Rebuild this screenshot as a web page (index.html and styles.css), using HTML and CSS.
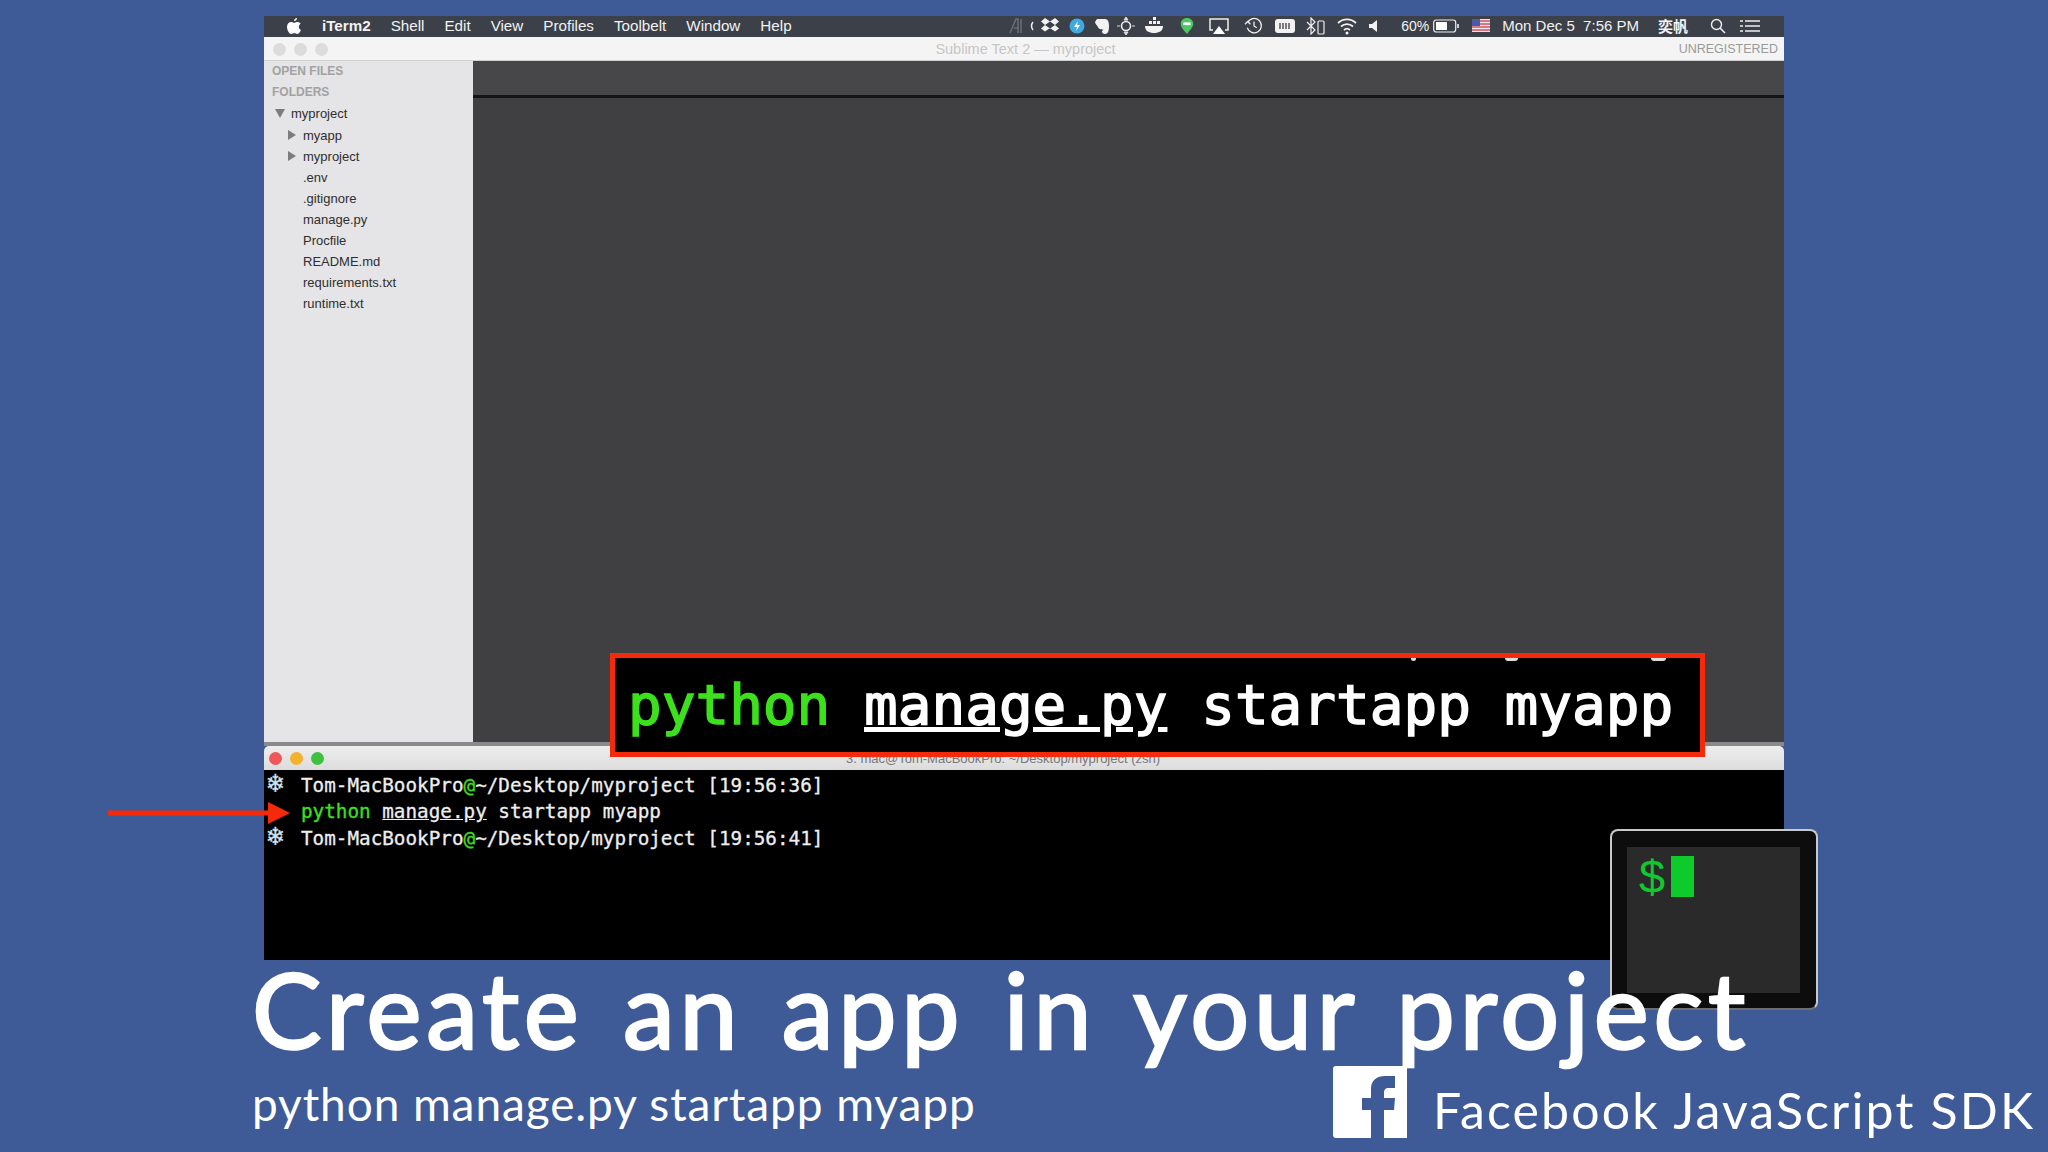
FILE: index.html
```html
<!DOCTYPE html>
<html lang="en">
<head>
    <meta charset="UTF-8">
    <title>Create an app in your project</title>
    <link rel="stylesheet" href="styles.css">
</head>
<body>
    <div class="screen">
        <div class="menubar">
            <svg class="apple" width="16" height="18" viewBox="0 0 16 18"><path d="M11 1c.2 1.500-1.200 3.200-2.900 3.100C7.900 2.600 9.400 1.100 11 1zM14.900 13c-.8 1.900-2.200 4-3.600 4-1.200 0-1.500-.7-3-.7s-1.900.7-3 .7C3.500 17 1 13.500 1 10c0-3.200 2.100-5 4.100-5 1.300 0 2.300.8 3.100.8S9.900 5 11.400 5c1.100 0 2.400.5 3.300 1.700-2.700 1.600-2.300 5.300.2 6.300z" fill="#fff"/></svg>
            <span class="menu-item app-name">iTerm2</span>
            <span class="menu-item">Shell</span>
            <span class="menu-item">Edit</span>
            <span class="menu-item">View</span>
            <span class="menu-item">Profiles</span>
            <span class="menu-item">Toolbelt</span>
            <span class="menu-item">Window</span>
            <span class="menu-item">Help</span>
            <div class="tray">
                <svg class="tray-icon w15" viewBox="0 0 15 18"><path d="M1 16L7 2h2v14M5 11h5M12 2v14" fill="none" stroke="#6b6e75" stroke-width="1.500"/></svg>
                <svg class="tray-icon w5" viewBox="0 0 5 18"><path d="M4 5Q1 9 4 13" fill="none" stroke="#eee" stroke-width="1.500"/></svg>
                <svg class="tray-icon w20 dropbox" viewBox="0 0 20 18"><path d="M5 1l5 3.500L15 1l4 3.500L15 8l4 3.500-4 3-5-3.500-5 3.500-4-3L5 8 1 4.500zM5 8l5 3.500L15 8l-5-3.500z" fill="#f2f2f2"/></svg>
                <svg class="tray-icon w16" viewBox="0 0 16 18"><circle cx="8" cy="9" r="7.500" fill="#3fa9e0"/><path d="M9 4L5 10h3l-1 4 4-6H8z" fill="#fff"/></svg>
                <svg class="tray-icon w16 evernote" viewBox="0 0 16 18"><path d="M3 2h8c3 0 4 3 4 7 0 5-1 8-4 8-2 0-3-1-3-2.500 0-1 1-1.500 2-1.500-2-1-5 0-6-3C3 8 1 7 1 5z" fill="#f2f2f2"/></svg>
                <svg class="tray-icon w20 drone" viewBox="0 0 20 18"><path d="M10 0l2 3H8zM10 18l-2-3h4zM1 9h3M16 9h3" stroke="#ddd" fill="#ddd"/><circle cx="10" cy="9" r="4.500" fill="none" stroke="#eee" stroke-width="1.600"/></svg>
                <svg class="tray-icon w22" viewBox="0 0 22 18"><path d="M1 9h18c0 5-4 7-9 7S1 14 1 9z" fill="#f2f2f2"/><path d="M5 4h3v3H5zM9 4h3v3H9zM9 0h3v3H9zM13 4h3v3h-3z" fill="#f2f2f2"/></svg>
                <svg class="tray-icon w16 line-app" viewBox="0 0 16 20"><path d="M8 1c4 0 7 3 7 6.500 0 4-4 7-7 11.500C5 15 1 11.500 1 7.500 1 4 4 1 8 1z" fill="#4cc764"/><rect x="4" y="6" width="8" height="3" fill="#fff"/></svg>
                <svg class="tray-icon w20 airplay" viewBox="0 0 20 18"><path d="M4 13H1V2h18v11h-3" fill="none" stroke="#eee" stroke-width="1.500"/><path d="M10 9l6 8H4z" fill="#fff"/></svg>
                <svg class="tray-icon w20" viewBox="0 0 20 20"><path d="M3 6a8 8 0 1 1-.5 6" fill="none" stroke="#eee" stroke-width="1.400"/><path d="M0 8l3-3 3 3M10 5v5l3 2" fill="none" stroke="#eee" stroke-width="1.400"/></svg>
                <svg class="tray-icon w20" viewBox="0 0 20 18"><rect x="0" y="2" width="20" height="14" rx="3" fill="#f2f2f2"/><path d="M5 6v6M8 6v6M11 6v6M14 6v6" stroke="#555" stroke-width="1.500"/></svg>
                <svg class="tray-icon w20" viewBox="0 0 20 18"><path d="M1 5l8 8-4 4V1l4 4-8 8" fill="none" stroke="#eee" stroke-width="1.200"/><rect x="12" y="4" width="6" height="13" rx="1" fill="none" stroke="#eee" stroke-width="1.200"/></svg>
                <svg class="tray-icon w20" viewBox="0 0 20 18"><path d="M1 6a13 13 0 0 1 18 0M4 9.500a9 9 0 0 1 12 0M7 13a4.500 4.500 0 0 1 6 0" fill="none" stroke="#f2f2f2" stroke-width="1.800"/><circle cx="10" cy="16" r="1.500" fill="#f2f2f2"/></svg>
                <svg class="tray-icon w12" viewBox="0 0 12 18"><path d="M1 7h3l5-4v12l-5-4H1z" fill="#f2f2f2"/></svg>
                <span class="tray-text pct">60%</span>
                <svg class="tray-icon w26" viewBox="0 0 26 14"><rect x=".7" y="1" width="22" height="12" rx="2.500" fill="none" stroke="#eee" stroke-width="1.200"/><rect x="3" y="3" width="11" height="8" fill="#fff"/><rect x="24" y="5" width="2" height="4" fill="#ccc"/></svg>
                <svg class="tray-icon flag" viewBox="0 0 18 13"><rect width="18" height="13" fill="#e9e9ee"/><path d="M0 2h18M0 5h18M0 8h18M0 11h18" stroke="#d8505f" stroke-width="1.400"/><rect width="8" height="7" fill="#4a5aa8"/></svg>
                <span class="tray-text clock">Mon Dec 5 &nbsp;7:56 PM</span>
                <span class="tray-text name">奕帆</span>
                <svg class="tray-icon search" viewBox="0 0 16 16"><circle cx="6.500" cy="6.500" r="5" fill="none" stroke="#eee" stroke-width="1.400"/><path d="M10 10l5 5" stroke="#eee" stroke-width="1.600"/></svg>
                <svg class="tray-icon lines" viewBox="0 0 20 14"><path d="M5 2h15M5 7h15M5 12h15M0 2h3M0 7h3M0 12h3" stroke="#eee" stroke-width="1.600"/></svg>
            </div>
        </div>

        <div class="sublime">
            <div class="sublime-title">
                <div class="lights">
                    <span class="light"></span>
                    <span class="light"></span>
                    <span class="light"></span>
                </div>
                <span class="sublime-name">Sublime Text 2 — myproject</span>
                <span class="unregistered">UNREGISTERED</span>
            </div>
            <div class="sublime-body">
                <div class="sidebar">
                    <div class="side-head">OPEN FILES</div>
                    <div class="side-head">FOLDERS</div>
                    <div class="side-row"><span class="caret-down"></span>myproject</div>
                    <div class="side-row depth"><span class="caret-right"></span>myapp</div>
                    <div class="side-row depth"><span class="caret-right"></span>myproject</div>
                    <div class="side-row file">.env</div>
                    <div class="side-row file">.gitignore</div>
                    <div class="side-row file">manage.py</div>
                    <div class="side-row file">Procfile</div>
                    <div class="side-row file">README.md</div>
                    <div class="side-row file">requirements.txt</div>
                    <div class="side-row file">runtime.txt</div>
                </div>
                <div class="editor">
                    <div class="tabbar"></div>
                </div>
            </div>
        </div>
        <div class="divider"></div>

        <div class="terminal">
            <div class="term-title">
                <div class="lights">
                    <span class="light red"></span>
                    <span class="light yellow"></span>
                    <span class="light green"></span>
                </div>
                <span class="term-name">3. mac@Tom-MacBookPro: ~/Desktop/myproject (zsh)</span>
            </div>
            <div class="term-body">
                <div class="term-line"><span class="flake">❄</span><span>Tom-MacBookPro<span class="hi">@</span>~/Desktop/myproject [19:56:36]</span></div>
                <div class="term-line"><span class="flake"></span><span><span class="hi">python</span> <u>manage.py</u> startapp myapp</span></div>
                <div class="term-line"><span class="flake">❄</span><span>Tom-MacBookPro<span class="hi">@</span>~/Desktop/myproject [19:56:41]</span></div>
            </div>
        </div>
    </div>

    <div class="callout">
        <span class="blob b1"></span>
        <span class="blob b2"></span>
        <span class="blob b3"></span>
        <div class="callout-text"><span class="hi">python</span> <u>manage.py</u> startapp myapp</div>
    </div>

    <svg class="arrow" width="182" height="22" viewBox="0 0 182 22"><path d="M0 8.500h160V0l22 11-22 11v-8.500H0z" fill="#f52a0a"/></svg>

    <div class="dock-icon">
        <div class="dock-screen">
            <span class="dock-dollar">$</span>
            <span class="dock-cursor"></span>
        </div>
    </div>

    <div class="caption">
        <h1 class="headline">Create an app in your project</h1>
        <div class="caption-row">
            <span class="command">python manage.py startapp myapp</span>
            <div class="brand">
                <svg class="fb" width="74" height="72" viewBox="0 0 74 72"><path d="M3 0h71v72H3a3 3 0 0 1-3-3V3a3 3 0 0 1 3-3z" fill="#fff"/><path d="M38 72V44H29V32h9V23C38 14 44 10 52 10h10v12h-6c-4 0-5 2-5 5v5h11l-1 12H51v28z" fill="#3e5b97"/></svg>
                <span class="brand-name">Facebook JavaScript SDK</span>
            </div>
        </div>
    </div>
</body>
</html>
```

FILE: styles.css
```css
body {
    position: relative;
    width: 2048px;
    height: 1152px;
    margin: 0;
    overflow: hidden;
    background: #3e5b97;
    font-family: 'Liberation Sans', sans-serif;
}
.screen {
    width: 1520px;
    margin-left: 264px;
    padding-top: 16px;
}
.menubar {
    display: flex;
    align-items: center;
    height: 21px;
    box-sizing: border-box;
    padding: 0 24px 2px 22px;
    background: #3b4049;
    color: #f2f2f2;
    font-size: 15.2px;
}
.apple {
    margin-right: 20px;
}
.menu-item {
    margin-right: 20px;
}
.app-name {
    font-weight: bold;
}
.tray {
    display: flex;
    align-items: center;
    margin-left: auto;
}
.tray-icon {
    height: 18px;
    margin-right: 10px;
    flex: none;
}
.w5 { width: 5px; margin-right: 6px; }
.w12 { width: 12px; margin-right: 21px; }
.w15 { width: 15px; margin-right: 5px; }
.w16 { width: 16px; margin-right: 9px; }
.w20 { width: 20px; margin-right: 11px; }
.w22 { width: 22px; margin-right: 13px; }
.w26 { width: 26px; height: 14px; margin-right: 13px; }
.dropbox { margin-right: 8.5px; }
.evernote { margin-right: 6.5px; }
.drone { margin-right: 8px; }
.line-app { margin-right: 14px; }
.airplay { margin-right: 15px; }
.flag { width: 18px; height: 13px; margin-right: 12px; }
.search { width: 16px; height: 16px; margin-left: 22px; margin-right: 14px; }
.lines { width: 20px; height: 14px; margin-right: 0; }
.tray-text {
    font-size: 14px;
    white-space: nowrap;
}
.pct {
    margin-right: 4px;
}
.clock {
    font-size: 15px;
}
.name {
    margin-left: 19px;
    font-family: 'Noto Sans CJK SC', sans-serif;
    font-weight: bold;
    font-size: 15px;
}

.sublime-title {
    display: grid;
    grid-template-columns: 1fr auto 1fr;
    align-items: center;
    height: 24px;
    padding: 1px 6px 0 9px;
    background: #f4f4f4;
    border-bottom: 1px solid #d0d0d0;
    box-sizing: border-box;
    font-size: 14.5px;
}
.lights {
    display: flex;
    gap: 8px;
}
.light {
    width: 13px;
    height: 13px;
    border-radius: 50%;
    background: #dcdcdc;
}
.light.red { background: #f0565a; }
.light.yellow { background: #f5b12e; }
.light.green { background: #3cc23f; }
.sublime-name {
    color: #c6c6c6;
}
.unregistered {
    justify-self: end;
    color: #9a9a9a;
    font-size: 12.5px;
}
.sublime-body {
    display: flex;
    height: 681px;
}
.sidebar {
    width: 209px;
    padding: 0 0 0 8px;
    box-sizing: border-box;
    background: #e5e4e6;
    color: #2f2f2f;
    font-size: 13px;
}
.side-head {
    height: 21.2px;
    line-height: 21.2px;
    font-weight: bold;
    font-size: 12px;
    color: #a2a2a2;
}
.side-row {
    display: flex;
    align-items: center;
    height: 21.100px;
    padding-left: 3px;
}
.side-row.depth {
    padding-left: 16px;
}
.side-row.file {
    padding-left: 31px;
}
.caret-down {
    width: 0;
    height: 0;
    margin-right: 6px;
    border-left: 5px solid transparent;
    border-right: 5px solid transparent;
    border-top: 9px solid #7c7c7c;
}
.caret-right {
    width: 0;
    height: 0;
    margin-right: 7px;
    border-top: 5px solid transparent;
    border-bottom: 5px solid transparent;
    border-left: 8px solid #7c7c7c;
}
.editor {
    flex: 1;
    background: #404042;
}
.tabbar {
    height: 34px;
    background: #47474a;
    border-bottom: 3px solid #141414;
}
.divider {
    height: 4px;
    background: #8a8a8a;
}

.term-title {
    position: relative;
    display: flex;
    align-items: center;
    height: 24px;
    padding-left: 5px;
    background: linear-gradient(#eeeeee, #dcdcdc);
    border-radius: 5px 5px 0 0;
}
.term-name {
    position: absolute;
    left: 582px;
    color: #777;
    font-size: 13px;
}
.term-body {
    height: 190px;
    padding-top: 3px;
    box-sizing: border-box;
    background: #000;
    color: #eee;
    font-family: 'DejaVu Sans Mono', monospace;
    font-size: 19.3px;
    -webkit-text-stroke: 0.3px;
}
.term-line {
    display: flex;
    height: 26.3px;
    line-height: 26.3px;
    white-space: pre;
}
.flake {
    width: 37px;
    padding-left: 3px;
    box-sizing: border-box;
    color: #cfe2f3;
    font-size: 27px;
    line-height: 20px;
}
.hi {
    color: #3de01c;
}

/* stuff lying over the screen recording */
.callout {
    position: absolute;
    left: 610px;
    top: 653px;
    width: 1095px;
    height: 104px;
    box-sizing: border-box;
    padding-left: 13px;
    border: 5px solid #f52a0a;
    background: #000;
    color: #fff;
    font-family: 'DejaVu Sans Mono', monospace;
    font-size: 56px;
    line-height: 94px;
    -webkit-text-stroke: 1.5px;
    overflow: hidden;
}
.callout-text {
    white-space: pre;
}
.blob {
    position: absolute;
    top: 0;
    height: 3px;
    background: #ddd;
    border-radius: 0 0 3px 3px;
}
.b1 { left: 796px; width: 5px; }
.b2 { left: 890px; width: 13px; }
.b3 { left: 1036px; width: 15px; }
.arrow {
    position: absolute;
    left: 108px;
    top: 802px;
}
.dock-icon {
    position: absolute;
    left: 1610px;
    top: 829px;
    width: 208px;
    height: 181px;
    box-sizing: border-box;
    padding: 16px 16px 15px 15px;
    background: #0d0d0d;
    border: 2px solid #c9c9c9;
    border-bottom-color: #6f6f6f;
    border-radius: 8px;
}
.dock-screen {
    display: flex;
    height: 100%;
    padding: 9px 0 0 12px;
    box-sizing: border-box;
    background: #2a2a2b;
}
.dock-dollar {
    color: #10c92f;
    font-size: 47px;
    line-height: 42px;
    height: 42px;
}
.dock-cursor {
    width: 23px;
    height: 41px;
    margin-left: 6px;
    background: #0ccb2b;
}

.caption {
    position: absolute;
    left: 252px;
    top: 950px;
    width: 1796px;
    color: #fff;
    font-family: 'Lato', sans-serif;
}
.headline {
    margin: 0;
    font-size: 104px;
    font-weight: normal;
    line-height: 118px;
    letter-spacing: 4.8px;
    word-spacing: 8px;
    -webkit-text-stroke: 2.5px #fff;
    white-space: nowrap;
}
.caption-row {
    display: flex;
    align-items: flex-start;
    margin-top: -2px;
}
.command {
    width: 1081px;
    padding-top: 10px;
    font-size: 46px;
    letter-spacing: 0.9px;
    white-space: nowrap;
}
.brand {
    display: flex;
    align-items: flex-start;
}
.fb {
    flex: none;
}
.brand-name {
    margin-left: 26px;
    padding-top: 14px;
    font-size: 50px;
    letter-spacing: 2.15px;
    white-space: nowrap;
}
```
